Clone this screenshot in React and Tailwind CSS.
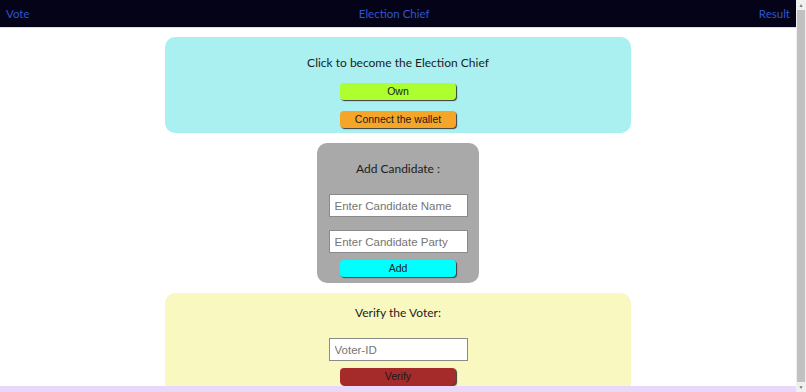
export default function App() {
  const heading = "text-[12px] text-[#1c1c1c] leading-[18px] text-center";
  const btn =
    "block mx-auto w-[116px] h-[17px] rounded-[4px] text-[10.5px] leading-[17px] text-[#1a1a1a] text-center shadow-[1px_1px_1px_#3a3a3a]";
  const input =
    "block mx-auto w-[139px] h-[23px] bg-white border border-[#8a8a8a] px-[5px] text-[11.5px] placeholder:text-[#757575] outline-none";

  return (
    <div className="flex w-[806px] h-[392px] overflow-hidden bg-white" style={{ fontFamily: "Lato, 'Open Sans', sans-serif" }}>
      <div className="flex flex-col w-[796px] h-full">
        <nav className="h-[28px] shrink-0 bg-[#050317] border-b border-[#dcdbe8] flex items-center justify-between px-[6px] text-[11.5px] text-[#2f56cc]">
          <a>Vote</a>
          <a>Election Chief</a>
          <a>Result</a>
        </nav>
        <div className="flex-1 overflow-hidden pt-[9px] flex flex-col items-center gap-[10px]" style={{ fontFamily: "'Liberation Sans', Arial, sans-serif" }}>
          <section className="w-[466px] h-[96px] shrink-0 bg-[#aaf0f1] rounded-[10px] pt-[17px]">
            <h2 className={heading} style={{ fontFamily: "Lato, sans-serif" }}>Click to become the Election Chief</h2>
            <button className={`${btn} mt-[11px] bg-[#adff2f]`}>Own</button>
            <button className={`${btn} mt-[11px] bg-[#f5a629]`}>Connect the wallet</button>
          </section>

          <section className="w-[162px] h-[140px] shrink-0 bg-[#a9a9a9] rounded-[10px] pt-[17px]">
            <h2 className={heading} style={{ fontFamily: "Lato, sans-serif" }}>Add Candidate :</h2>
            <input className={`${input} mt-[16px]`} placeholder="Enter Candidate Name" />
            <input className={`${input} mt-[13px]`} placeholder="Enter Candidate Party" />
            <button className={`${btn} mt-[7px] bg-[#00ffff]`}>Add</button>
          </section>

          <section className="w-[466px] h-[110px] shrink-0 bg-[#f9f8c1] rounded-t-[10px] pt-[11px]">
            <h2 className={heading} style={{ fontFamily: "Lato, sans-serif" }}>Verify the Voter:</h2>
            <input className={`${input} mt-[16px]`} placeholder="Voter-ID" />
            <button className={`${btn} mt-[7px] bg-[#a52a2a]`}>Verify</button>
          </section>
        </div>
        <div className="h-[6px] shrink-0 bg-[#ead8fa]" />
      </div>
      <div className="w-[10px] h-full bg-[#f0f0f0] flex flex-col items-center">
        <div className="h-[10px] text-[5px] leading-[10px] text-[#777]">▲</div>
        <div className="w-[8px] flex-1 bg-[#c1c1c1]" />
        <div className="h-[10px] text-[5px] leading-[10px] text-[#777]">▼</div>
      </div>
    </div>
  );
}
